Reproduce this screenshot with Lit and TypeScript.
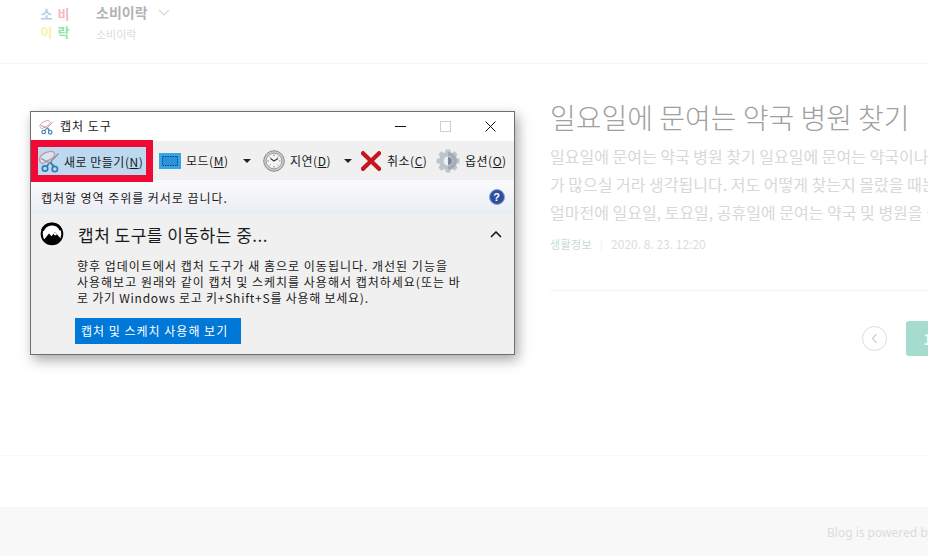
import { LitElement, html, css, svg } from "lit";
import { customElement } from "lit/decorators.js";

const scissors = (size: number) => svg`<svg width=${size} height=${size} viewBox="0 0 24 24" fill="none">
  <path d="M4.500 14.500C.500 13 .500 8.500 4.500 5.500 8.500 2.500 14 1.500 16 3.500c2 2-.500 5-4 7-2.500 1.400-5 2.800-7.500 4z" stroke="#d98d96" stroke-width="1.200" fill="#fff" fill-opacity=".35"/>
  <path d="M3 9.500l13.500 7" stroke="#8d8d93" stroke-width="1.200"/>
  <path d="M20.500 4.500L10.500 15" stroke="#8d8d93" stroke-width="1.200"/>
  <path d="M12.800 13.200l2.900 5M10.800 15.200l-2.600 2.200" stroke="#2d7fb8" stroke-width="1.700"/>
  <circle cx="7" cy="19.500" r="2.700" stroke="#2d7fb8" stroke-width="1.700"/>
  <circle cx="16.800" cy="20" r="2.700" stroke="#2d7fb8" stroke-width="1.700"/>
</svg>`;

const modeIcon = svg`<svg width="22" height="16" viewBox="0 0 22 16">
  <rect width="22" height="16" fill="#35a5e6"/>
  <rect x="3.500" y="3.500" width="15" height="9" fill="#2a92d8" stroke="#0b3f78" stroke-dasharray="1.500 1"/>
</svg>`;

const clockIcon = svg`<svg width="22" height="22" viewBox="0 0 22 22">
  <circle cx="11" cy="11" r="10.300" fill="#c9c9c9" stroke="#8e8e8e"/>
  <circle cx="11" cy="11" r="7.800" fill="#f4f4f4" stroke="#777" stroke-width=".6"/>
  <path d="M11 4.500v1.500M11 16v1.500M4.500 11H6M16 11h1.500M6.500 6.500l1 1M15.500 6.500l-1 1M6.500 15.500l1-1M15.500 15.500l-1-1" stroke="#666" stroke-width=".8"/>
  <path d="M11 11L7.500 8.500M11 11l4-2.500" stroke="#333" stroke-width="1.100" fill="none"/>
</svg>`;

const cancelIcon = svg`<svg width="20" height="20" viewBox="0 0 20 20">
  <path d="M2 2.500L18 18M18 2.500L2 18" stroke="#c8141f" stroke-width="4.200" stroke-linecap="square" transform="translate(0 -.2)" fill="none"/>
</svg>`;

const gearIcon = svg`<svg width="24" height="24" viewBox="0 0 24 24">
  <g fill="#bcc4cc">
    <circle cx="12" cy="12" r="9"/>
    ${[0, 45, 90, 135, 180, 225, 270, 315].map(
      (a) => svg`<rect x="9.500" y="0.500" width="5" height="5" rx="1" transform="rotate(${a} 12 12)"/>`
    )}
  </g>
  <path d="M12 3a9 9 0 0 1 0 18z" fill="#a4adb6"/>
  <circle cx="12" cy="12" r="4.500" fill="#eeeeee"/>
  <path d="M12 8a4 4 0 0 1 0 8z" fill="#7f8994"/>
</svg>`;

const helpIcon = svg`<svg width="16" height="16" viewBox="0 0 16 16">
  <circle cx="8" cy="8" r="7.500" fill="#2f4f9e" stroke="#8ea3cf"/>
  <text x="8" y="12" text-anchor="middle" font-size="11" font-weight="700" fill="#fff" font-family="Liberation Sans, sans-serif">?</text>
</svg>`;

const moveIcon = svg`<svg width="26" height="24" viewBox="0 0 26 24">
  <circle cx="13" cy="12" r="10.300" fill="#fff" stroke="#000" stroke-width="2"/>
  <path d="M3.500 8.500A10 10 0 0 1 22 8" fill="none" stroke="#000" stroke-width="3"/>
  <path d="M4.800 18L10 11.500l2.500 2.800L16 10l6 7A10.300 10.300 0 0 1 4.800 18z" fill="#000"/>
  <path d="M14.500 12L16 10l2 2.400-2 1z" fill="#fff"/>
</svg>`;

const arrow = html`<span class="arrow"></span>`;

@customElement("app-root")
export class AppRoot extends LitElement {
  static styles = css`
    :host {
      display: block;
      width: 928px;
      height: 556px;
      overflow: hidden;
      background: #fff;
      font-family: "Noto Sans CJK KR", "Noto Sans", sans-serif;
    }
    .page { display: flex; flex-direction: column; height: 556px; }

    /* blog header */
    .header {
      height: 64px;
      flex: none;
      display: flex;
      box-sizing: border-box;
      border-bottom: 1px solid #f6f6f6;
      padding-left: 38px;
    }
    .logo {
      width: 34px;
      height: 36px;
      margin-top: 5px;
      display: grid;
      grid-template-columns: 1fr 1fr;
      grid-template-rows: 1fr 1fr;
      font-size: 13px;
      font-weight: 700;
      line-height: 18px;
      text-align: center;
    }
    .brand { margin-left: 24px; display: flex; flex-direction: column; }
    .brand-name {
      margin-top: 3px;
      font-size: 14px;
      line-height: 19px;
      font-weight: 700;
      color: #b2b2b2;
      display: flex;
      align-items: center;
      gap: 10px;
    }
    .brand-sub { margin-top: 2px; font-size: 11px; line-height: 20px; color: #dcdcdc; }

    /* main row */
    .main {
      flex: none;
      height: 392px;
      box-sizing: border-box;
      border-bottom: 1px solid #f9f9f9;
      display: flex;
      padding: 47px 0 0 30px;
      gap: 35px;
    }

    /* snipping tool */
    .win {
      position: relative;
      flex: none;
      width: 485px;
      height: 244px;
      box-sizing: border-box;
      border: 1px solid #6e6e6e;
      background: #f0f0f0;
      box-shadow: 3px 5px 12px rgba(0, 0, 0, 0.35);
      color: #1a1a1a;
      font-size: 12px;
    }
    .title {
      height: 29px;
      background: #fff;
      display: flex;
      align-items: center;
      padding-left: 8px;
      gap: 5px;
      line-height: 24px;
    }
    .title span { letter-spacing: 1px; margin-bottom: 1px; }
    .ctrls { margin-left: auto; display: flex; align-items: center; margin-right: 18px; gap: 34px; }
    .ctrls svg { display: block; }
    .toolbar {
      height: 39px;
      background: #f0f0f0;
      display: flex;
      align-items: center;
      padding-left: 7px;
      white-space: nowrap;
    }
    .tool { display: flex; align-items: center; gap: 5px; height: 28px; letter-spacing: 0.5px; }
    .tool u { text-decoration-thickness: 1px; }
    .tool.new { width: 108px; background: #bcd9f0; gap: 2px; box-sizing: border-box; margin-top: 1px; }
    .tool.mode { margin-left: 13px; width: 84px; }
    .tool.delay { margin-left: 12px; gap: 5px; width: 81px; }
    .tool.cancel { margin-left: 9px; gap: 6px; width: 75px; }
    .tool.opts { gap: 5px; }
    .arrow {
      width: 0;
      height: 0;
      border-left: 4px solid transparent;
      border-right: 4px solid transparent;
      border-top: 4px solid #222;
      flex: none;
      margin-top: 1px;
    }
    .red {
      position: absolute;
      left: 0;
      top: 28px;
      width: 122px;
      height: 42px;
      box-sizing: border-box;
      border: 7px solid #ee0a35;
      pointer-events: none;
    }
    .hint {
      height: 34px;
      background: linear-gradient(#fbfbfd, #e9ecf3);
      display: flex;
      align-items: center;
      padding: 0 9px 0 10px;
      justify-content: space-between;
      letter-spacing: 0.95px;
    }
    .hint svg { display: block; }
    .notice { padding: 6px 12px 0 8px; }
    .notice-head { display: flex; align-items: center; height: 28px; }
    .notice-head .h { margin-left: 13px; font-size: 17px; letter-spacing: 0.5px; }
    .notice-head svg { display: block; }
    .notice-head .up { margin-left: auto; }
    .notice-body {
      margin: 10px 0 0 38px;
      width: 400px;
      font-size: 12px;
      letter-spacing: 1px;
      line-height: 16px;
      white-space: nowrap;
    }
    .notice-body .last { letter-spacing: 0.75px; }
    .cta {
      margin: 12px 0 0 36px;
      width: 166px;
      height: 26px;
      background: #0078d7;
      color: #fff;
      font-size: 12px;
      letter-spacing: 1px;
      line-height: 26px;
      padding-left: 6px;
      box-sizing: border-box;
      white-space: nowrap;
    }

    /* article */
    .article { flex: 1; min-width: 0; display: flex; flex-direction: column; }
    .post { padding-bottom: 38px; border-bottom: 1px solid #f4f4f4; }
    .post h2 {
      margin: -14px 0 0;
      font-size: 28px;
      line-height: 40px;
      font-weight: 300;
      color: #a0a0a0;
      white-space: nowrap;
    }
    .excerpt {
      margin-top: 5px;
      font-size: 16px;
      line-height: 28px;
      color: #d8d8d8;
      white-space: nowrap;
      overflow: hidden;
    }
    .meta { margin-top: 10px; font-size: 12px; line-height: 16px; color: #dcdcdc; display: flex; gap: 8px; white-space: nowrap; }
    .meta .cat { color: #c6dbd4; font-size: 11px; letter-spacing: 0.4px; }
    .meta .sep { color: #eee; font-size: 11px; }
    .pager { margin-top: 30px; display: flex; align-items: center; justify-content: flex-end; margin-right: -22px; gap: 19px; }
    .prev { width: 25px; height: 25px; border: 1px solid #dcdcdc; border-radius: 50%; box-sizing: border-box; display: flex; align-items: center; justify-content: center; }
    .prev svg { display: block; }
    .pg {
      width: 44px;
      height: 35px;
      border-radius: 3px;
      background: #a5dccd;
      color: #fff;
      font-size: 15px;
      font-weight: 700;
      line-height: 35px;
      text-align: center;
    }

    /* footer */
    .gap { flex: none; height: 51px; }
    .footer {
      flex: 1;
      background: #f8f8f8;
      display: flex;
      align-items: center;
      padding: 1px 0 0 827px;
      font-family: "Noto Sans", sans-serif;
      font-size: 12px;
      color: #dcdcdc;
      white-space: nowrap;
    }
  `;

  render() {
    return html`
      <div class="page">
        <header class="header">
          <div class="logo">
            <span style="color:#b9cdea">소</span>
            <span style="color:#f5b7c0">비</span>
            <span style="color:#f6f3a8">이</span>
            <span style="color:#93e3a8">락</span>
          </div>
          <div class="brand">
            <div class="brand-name">
              소비이락
              <svg width="12" height="7" viewBox="0 0 12 7" fill="none"><path d="M1 1l5 5 5-5" stroke="#d8d8d8" stroke-width="1.100"/></svg>
            </div>
            <div class="brand-sub">소비이락</div>
          </div>
        </header>

        <section class="main">
          <div class="win">
            <div class="title">
              ${scissors(16)}
              <span>캡처 도구</span>
              <div class="ctrls">
                <svg width="11" height="11" viewBox="0 0 11 11"><path d="M0 5.500h11" stroke="#111"/></svg>
                <svg width="11" height="11" viewBox="0 0 11 11" fill="none"><rect x=".5" y=".5" width="10" height="10" stroke="#cfcfcf"/></svg>
                <svg width="11" height="11" viewBox="0 0 11 11"><path d="M.5.500l10 10M10.500.500l-10 10" stroke="#111"/></svg>
              </div>
            </div>
            <div class="toolbar">
              <div class="tool new">${scissors(24)}<span>새로 만들기(<u>N</u>)</span></div>
              <div class="tool mode">${modeIcon}<span>모드(<u>M</u>)</span></div>
              ${arrow}
              <div class="tool delay">${clockIcon}<span>지연(<u>D</u>)</span></div>
              ${arrow}
              <div class="tool cancel">${cancelIcon}<span>취소(<u>C</u>)</span></div>
              <div class="tool opts">${gearIcon}<span>옵션(<u>O</u>)</span></div>
            </div>
            <div class="hint"><span>캡처할 영역 주위를 커서로 끕니다.</span>${helpIcon}</div>
            <div class="notice">
              <div class="notice-head">
                ${moveIcon}
                <span class="h">캡처 도구를 이동하는 중...</span>
                <svg class="up" width="12" height="7" viewBox="0 0 12 7" fill="none"><path d="M1 6l5-5 5 5" stroke="#111" stroke-width="1.500"/></svg>
              </div>
              <div class="notice-body">
                향후 업데이트에서 캡처 도구가 새 홈으로 이동됩니다. 개선된 기능을<br />
                사용해보고 원래와 같이 캡처 및 스케치를 사용해서 캡처하세요(또는 바<br />
                <span class="last">로 가기 Windows 로고 키+Shift+S를 사용해 보세요).</span>
              </div>
              <div class="cta">캡처 및 스케치 사용해 보기</div>
            </div>
            <div class="red"></div>
          </div>

          <div class="article">
            <div class="post">
              <h2>일요일에 문여는 약국 병원 찾기</h2>
              <div class="excerpt">
                일요일에 문여는 약국 병원 찾기 일요일에 문여는 약국이나<br />
                가 많으실 거라 생각됩니다. 저도 어떻게 찾는지 몰랐을 때는<br />
                얼마전에 일요일, 토요일, 공휴일에 문여는 약국 및 병원을 쉽
              </div>
              <div class="meta"><span class="cat">생활정보</span><span class="sep">|</span><span>2020. 8. 23. 12:20</span></div>
            </div>
            <div class="pager">
              <div class="prev"><svg width="7" height="11" viewBox="0 0 7 11" fill="none"><path d="M5.500 1L1.500 5.500l4 4.500" stroke="#cfcfcf" stroke-width="1.200"/></svg></div>
              <div class="pg">1</div>
            </div>
          </div>
        </section>

        <div class="gap"></div>
        <footer class="footer">Blog is powered by</footer>
      </div>
    `;
  }
}
